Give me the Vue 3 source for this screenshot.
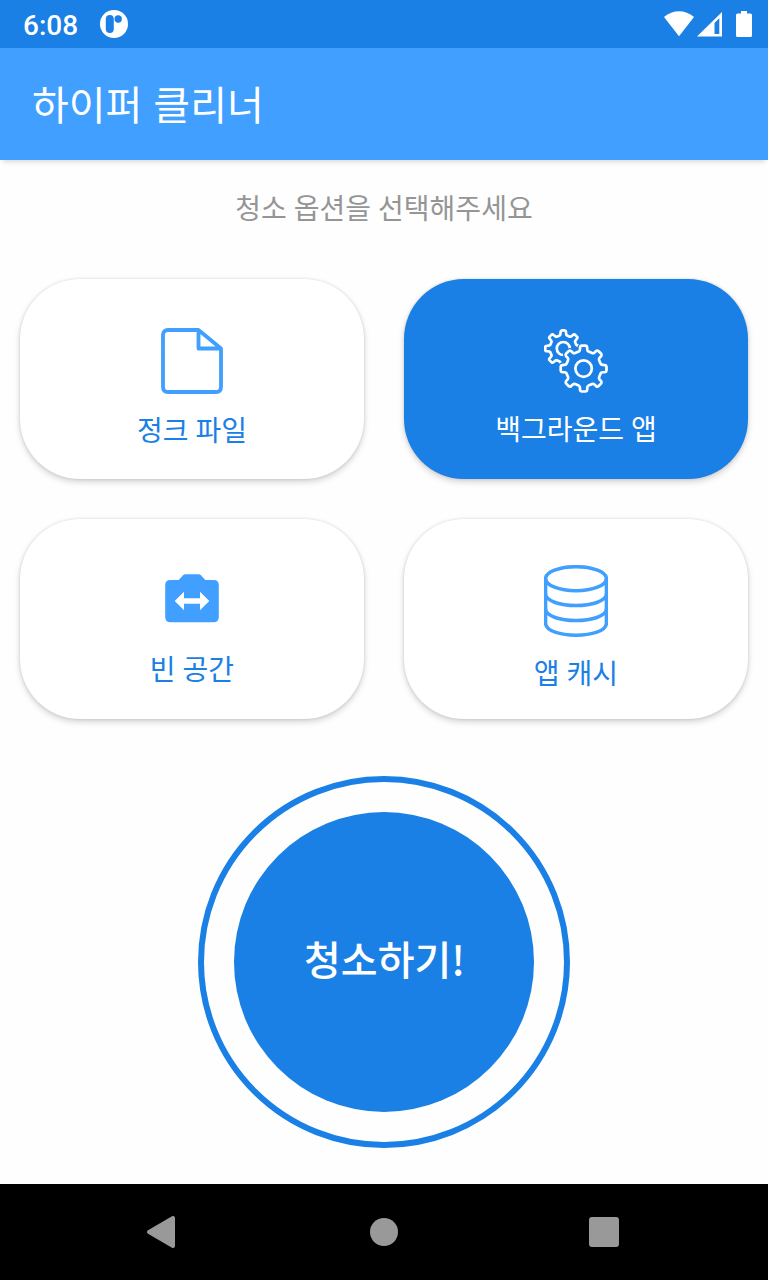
<template>
  <div class="screen">
    <div class="status-bar">
      <span class="time">6:08</span>
      <svg class="notice" viewBox="0 0 28 28">
        <circle cx="14" cy="14" r="14" fill="#fff" />
        <rect x="5.8" y="5" width="8" height="18" rx="4" />
        <circle cx="18.2" cy="9" r="3.7" />
      </svg>
      <svg class="signals" viewBox="0 0 90 28">
        <path d="M0 7C9-0.7 21-0.7 30 7L15 26.3Z" />
        <path fill-rule="evenodd" d="M58 2V26.5H33ZM55.3 8.2L50.5 13V24H55.3Z" />
        <path d="M77 1H83V3.5H86.5Q88 3.5 88 5V25.5Q88 27 86.5 27H73.5Q72 27 72 25.5V5Q72 3.5 73.5 3.5H77Z" />
      </svg>
    </div>

    <header class="app-bar">
      <h1>하이퍼 클리너</h1>
    </header>

    <main class="content">
      <p class="hint">청소 옵션을 선택해주세요</p>

      <div class="options">
        <button
          v-for="option in options"
          :key="option.id"
          class="option"
          :class="{ selected: selected === option.id }"
          @click="selected = option.id"
        >
          <svg v-if="option.id === 'junk'" class="icon file" viewBox="0 0 62 66">
            <path d="M37.5 2H7Q2 2 2 7V59Q2 64 7 64H55Q60 64 60 59V20.5ZM37.5 2V20.5H60" />
          </svg>
          <svg v-else-if="option.id === 'background'" class="icon gears" viewBox="0 0 64 64">
            <mask id="behind" maskUnits="userSpaceOnUse" x="0" y="0" width="64" height="64">
              <rect width="64" height="64" fill="#fff" stroke="none" />
              <path :d="bigGear" fill="#000" stroke="#000" stroke-width="5" />
            </mask>
            <g mask="url(#behind)">
              <path :d="smallGear" />
              <circle cx="19.3" cy="19.5" r="6.5" />
            </g>
            <path :d="bigGear" />
            <circle cx="39.6" cy="39.6" r="8.2" />
          </svg>
          <svg v-else-if="option.id === 'space'" class="icon space" viewBox="0 0 64 64">
            <path fill-rule="evenodd" d="M18.7 11L23 6.3Q24 5.3 25.4 5.3H38.6Q40 5.3 41 6.3L45.3 11H53.5Q58.8 11 58.8 16.3V48Q58.8 53.3 53.5 53.3H10.5Q5.2 53.3 5.2 48V16.3Q5.2 11 10.5 11ZM14.7 32L24 41.2V34.8H40V41.2L49.3 32L40 22.8V29.2H24V22.8Z" />
          </svg>
          <svg v-else class="icon cache" viewBox="0 0 64 72">
            <ellipse cx="32" cy="13.7" rx="30.4" ry="12" />
            <path d="M1.6 13.7V58.2C1.6 74.2 62.4 74.2 62.4 58.2V13.7M1.6 28.5C1.6 44.5 62.4 44.5 62.4 28.5M1.6 43.5C1.6 59.5 62.4 59.5 62.4 43.5" />
          </svg>
          <span class="label">{{ option.label }}</span>
        </button>
      </div>

      <div class="clean-ring">
        <button class="clean">청소하기!</button>
      </div>
    </main>

    <nav class="nav-bar">
      <svg viewBox="0 0 32 32">
        <path d="M3 16L27 2V30Z" stroke-width="4" stroke-linejoin="round" />
      </svg>
      <svg viewBox="0 0 32 32"><circle cx="16" cy="16" r="14" /></svg>
      <svg viewBox="0 0 32 32"><rect x="1" y="1" width="30" height="30" rx="3" /></svg>
    </nav>
  </div>
</template>

<script setup>
import { ref } from 'vue'

const selected = ref('background')

const options = [
  { id: 'junk', label: '정크 파일' },
  { id: 'background', label: '백그라운드 앱' },
  { id: 'space', label: '빈 공간' },
  { id: 'cache', label: '앱 캐시' }
]

// outline of a gear with eight rounded teeth
const gearPath = (cx, cy, outer, inner) => {
  const at = (deg, r) => {
    const a = (deg * Math.PI) / 180
    return `${(cx + r * Math.cos(a)).toFixed(2)} ${(cy + r * Math.sin(a)).toFixed(2)}`
  }
  let d = ''
  for (let i = 0; i < 8; i++) {
    const t = i * 45
    d += `${i ? 'L' : 'M'}${at(t - 11, inner + 1.2)}`
    d += `L${at(t - 9.5, outer - 1.5)}Q${at(t - 8.5, outer)} ${at(t - 5, outer)}`
    d += `L${at(t + 5, outer)}Q${at(t + 8.5, outer)} ${at(t + 9.5, outer - 1.5)}`
    d += `L${at(t + 11, inner + 1.2)}Q${at(t + 12, inner)} ${at(t + 16, inner - 0.3)}`
    d += `L${at(t + 29, inner - 0.3)}Q${at(t + 33, inner)} ${at(t + 34, inner + 1.2)}`
  }
  return d + 'Z'
}

const bigGear = gearPath(39.6, 39.6, 23, 18)
const smallGear = gearPath(19.3, 19.5, 18.1, 13.8)
</script>

<style>
body {
  margin: 0;
}
</style>

<style scoped>
.screen {
  display: flex;
  flex-direction: column;
  width: 768px;
  height: 1280px;
  overflow: hidden;
  background: #fefefe;
  font-family: 'Noto Sans CJK KR', sans-serif;
}

.status-bar {
  display: flex;
  align-items: center;
  box-sizing: border-box;
  height: 48px;
  padding: 0 14px 0 23px;
  background: #1a80e5;
  color: #fff;
  flex-shrink: 0;
}

.time {
  width: 77px;
  padding-top: 3px;
  font-family: Roboto, sans-serif;
  font-size: 28px;
  font-weight: 500;
  line-height: 32px;
}

.notice {
  width: 28px;
  height: 28px;
  fill: #1a80e5;
}

.signals {
  width: 90px;
  height: 28px;
  margin-left: auto;
  fill: #fff;
}

.app-bar {
  display: flex;
  align-items: center;
  height: 112px;
  padding-left: 32px;
  background: #409fff;
  box-shadow: 0 5px 5px -3px rgba(0, 0, 0, 0.15);
  flex-shrink: 0;
}

h1 {
  margin: 0 0 2px;
  color: #fff;
  font-size: 40px;
  font-weight: 400;
  line-height: 56px;
  word-spacing: 2px;
}

.content {
  display: flex;
  flex: 1;
  flex-direction: column;
  align-items: center;
}

.hint {
  margin: 27px 0 52px;
  color: #959595;
  font-size: 28px;
  line-height: 40px;
  word-spacing: 0.7px;
}

.options {
  display: grid;
  grid-template-columns: 344px 344px;
  grid-auto-rows: 200px;
  gap: 40px;
}

.option {
  display: flex;
  flex-direction: column;
  align-items: center;
  justify-content: center;
  padding: 20px 0 0;
  border: none;
  border-radius: 60px;
  background: #fff;
  box-shadow: 0 3px 6px rgba(0, 0, 0, 0.17), 0 0 3px rgba(0, 0, 0, 0.12);
  color: #1a80e5;
  font-family: inherit;
  font-size: 28px;
  word-spacing: 0.7px;
}

.option.selected {
  background: #1a80e5;
  color: #fff;
}

.icon {
  fill: none;
  stroke: #409fff;
  width: 64px;
  height: 64px;
}

.file {
  width: 62px;
  height: 66px;
  stroke-width: 3.8;
  stroke-linejoin: round;
}

.gears {
  stroke-width: 2.7;
  stroke-linejoin: round;
}

.selected .icon {
  stroke: #fff;
}

.space {
  fill: #409fff;
  stroke: none;
}

.cache {
  height: 72px;
  stroke-width: 3.5;
}

.label {
  margin: 15px 0 1px;
  line-height: 40px;
}

.clean-ring {
  box-sizing: border-box;
  width: 372px;
  height: 372px;
  margin-top: 57px;
  padding: 30px;
  border: 6px solid #1a80e5;
  border-radius: 50%;
}

.clean {
  width: 300px;
  height: 300px;
  padding: 0 0 9px 1px;
  border: none;
  border-radius: 50%;
  background: #1a80e5;
  color: #fff;
  font-family: inherit;
  font-size: 40px;
  font-weight: 500;
}

.nav-bar {
  display: flex;
  align-items: center;
  justify-content: space-between;
  box-sizing: border-box;
  height: 96px;
  padding: 0 148px 0 148px;
  background: #000;
  flex-shrink: 0;
}

.nav-bar svg {
  width: 32px;
  height: 32px;
  overflow: visible;
  fill: #999;
}

.nav-bar path {
  stroke: #999;
  transform: translateX(-2px);
}
</style>
